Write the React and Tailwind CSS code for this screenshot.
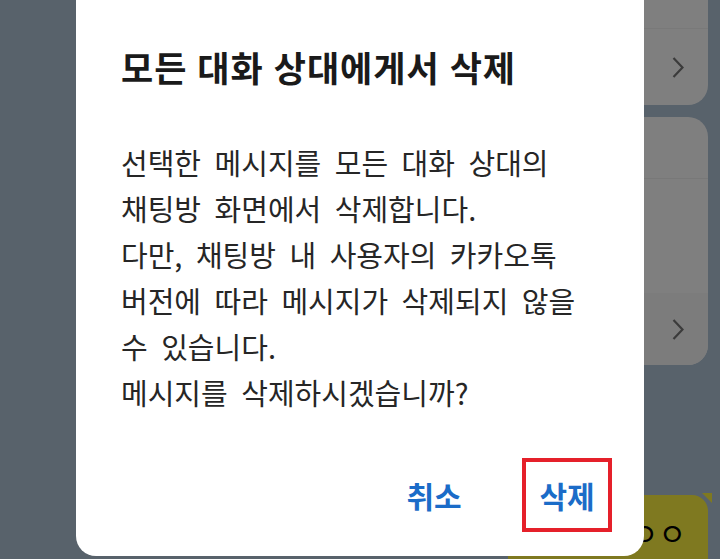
import React from "react";

const FONT = "font-['Noto_Sans_CJK_KR','Noto_Sans',sans-serif]";

function Chevron() {
  return (
    <svg width="12" height="21" viewBox="0 0 12 21" className="shrink-0">
      <polyline points="1.5,1 10.5,10.5 1.5,20" fill="none" stroke="#777" strokeWidth="2.2" />
    </svg>
  );
}

function ChatBackground() {
  return (
    <div className="flex h-full flex-col items-end bg-[#b1c4d6] pr-[12px]">
      {/* shared-item card */}
      <div className="-mt-[20px] w-[560px] shrink-0 overflow-hidden rounded-[20px] bg-white">
        <div className="h-[49px] border-b border-[#f2f2f2]" />
        <div className="flex h-[76px] items-center justify-end pr-[24px]">
          <Chevron />
        </div>
      </div>

      {/* second card */}
      <div className="mt-[12px] w-[560px] shrink-0 overflow-hidden rounded-[20px] bg-white">
        <div className="h-[62px] border-b border-[#f0f0f0]" />
        <div className="h-[114px]" />
        <div className="flex h-[72px] items-center justify-end bg-[#f8f8f8] pr-[24px]">
          <Chevron />
        </div>
      </div>

      {/* my message bubble */}
      <div className="relative mt-[130px] flex h-[80px] w-[200px] shrink-0 items-center justify-end rounded-[16px] bg-[#fef341] pb-[6px] pr-[22px]">
        <span className={`${FONT} text-[30px] leading-none text-black`}>ㅇㅇ</span>
        <div className="absolute -right-[4px] -top-[2px] h-0 w-0 border-l-[10px] border-t-[10px] border-l-transparent border-t-[#fef341]" />
      </div>
    </div>
  );
}

export default function App() {
  return (
    <div className={`relative h-[559px] w-[720px] overflow-hidden ${FONT}`}>
      <ChatBackground />
      <div className="absolute inset-0 bg-black/50" />

      {/* delete confirm dialog */}
      <div className="absolute bottom-[3px] left-[76px] top-[-30px] flex w-[568px] flex-col rounded-[20px] bg-white pl-[45px] pr-[32px] pt-[74px]">
        <h1 className="text-[35px] font-bold leading-[46px] tracking-[1px] text-[#1a1a1a] [word-spacing:1px]">
          모든 대화 상대에게서 삭제
        </h1>
        <p className="mt-[49px] text-[29px] leading-[46px] text-[#262626] [word-spacing:7px]">
          선택한 메시지를 모든 대화 상대의
          <br />
          채팅방 화면에서 삭제합니다.
          <br />
          다만, 채팅방 내 사용자의 카카오톡
          <br />
          버전에 따라 메시지가 삭제되지 않을
          <br />
          수 있습니다.
          <br />
          메시지를 삭제하시겠습니까?
        </p>
        <div className="mt-auto mb-[24px] flex justify-end gap-[43px]">
          <button className="flex h-[74px] w-[90px] items-center justify-center border-4 border-transparent text-[30px] font-bold text-[#1b6cc8]">
            취소
          </button>
          <button className="flex h-[74px] w-[90px] items-center justify-center border-4 border-[#e5202a] text-[30px] font-bold text-[#1b6cc8]">
            삭제
          </button>
        </div>
      </div>
    </div>
  );
}
